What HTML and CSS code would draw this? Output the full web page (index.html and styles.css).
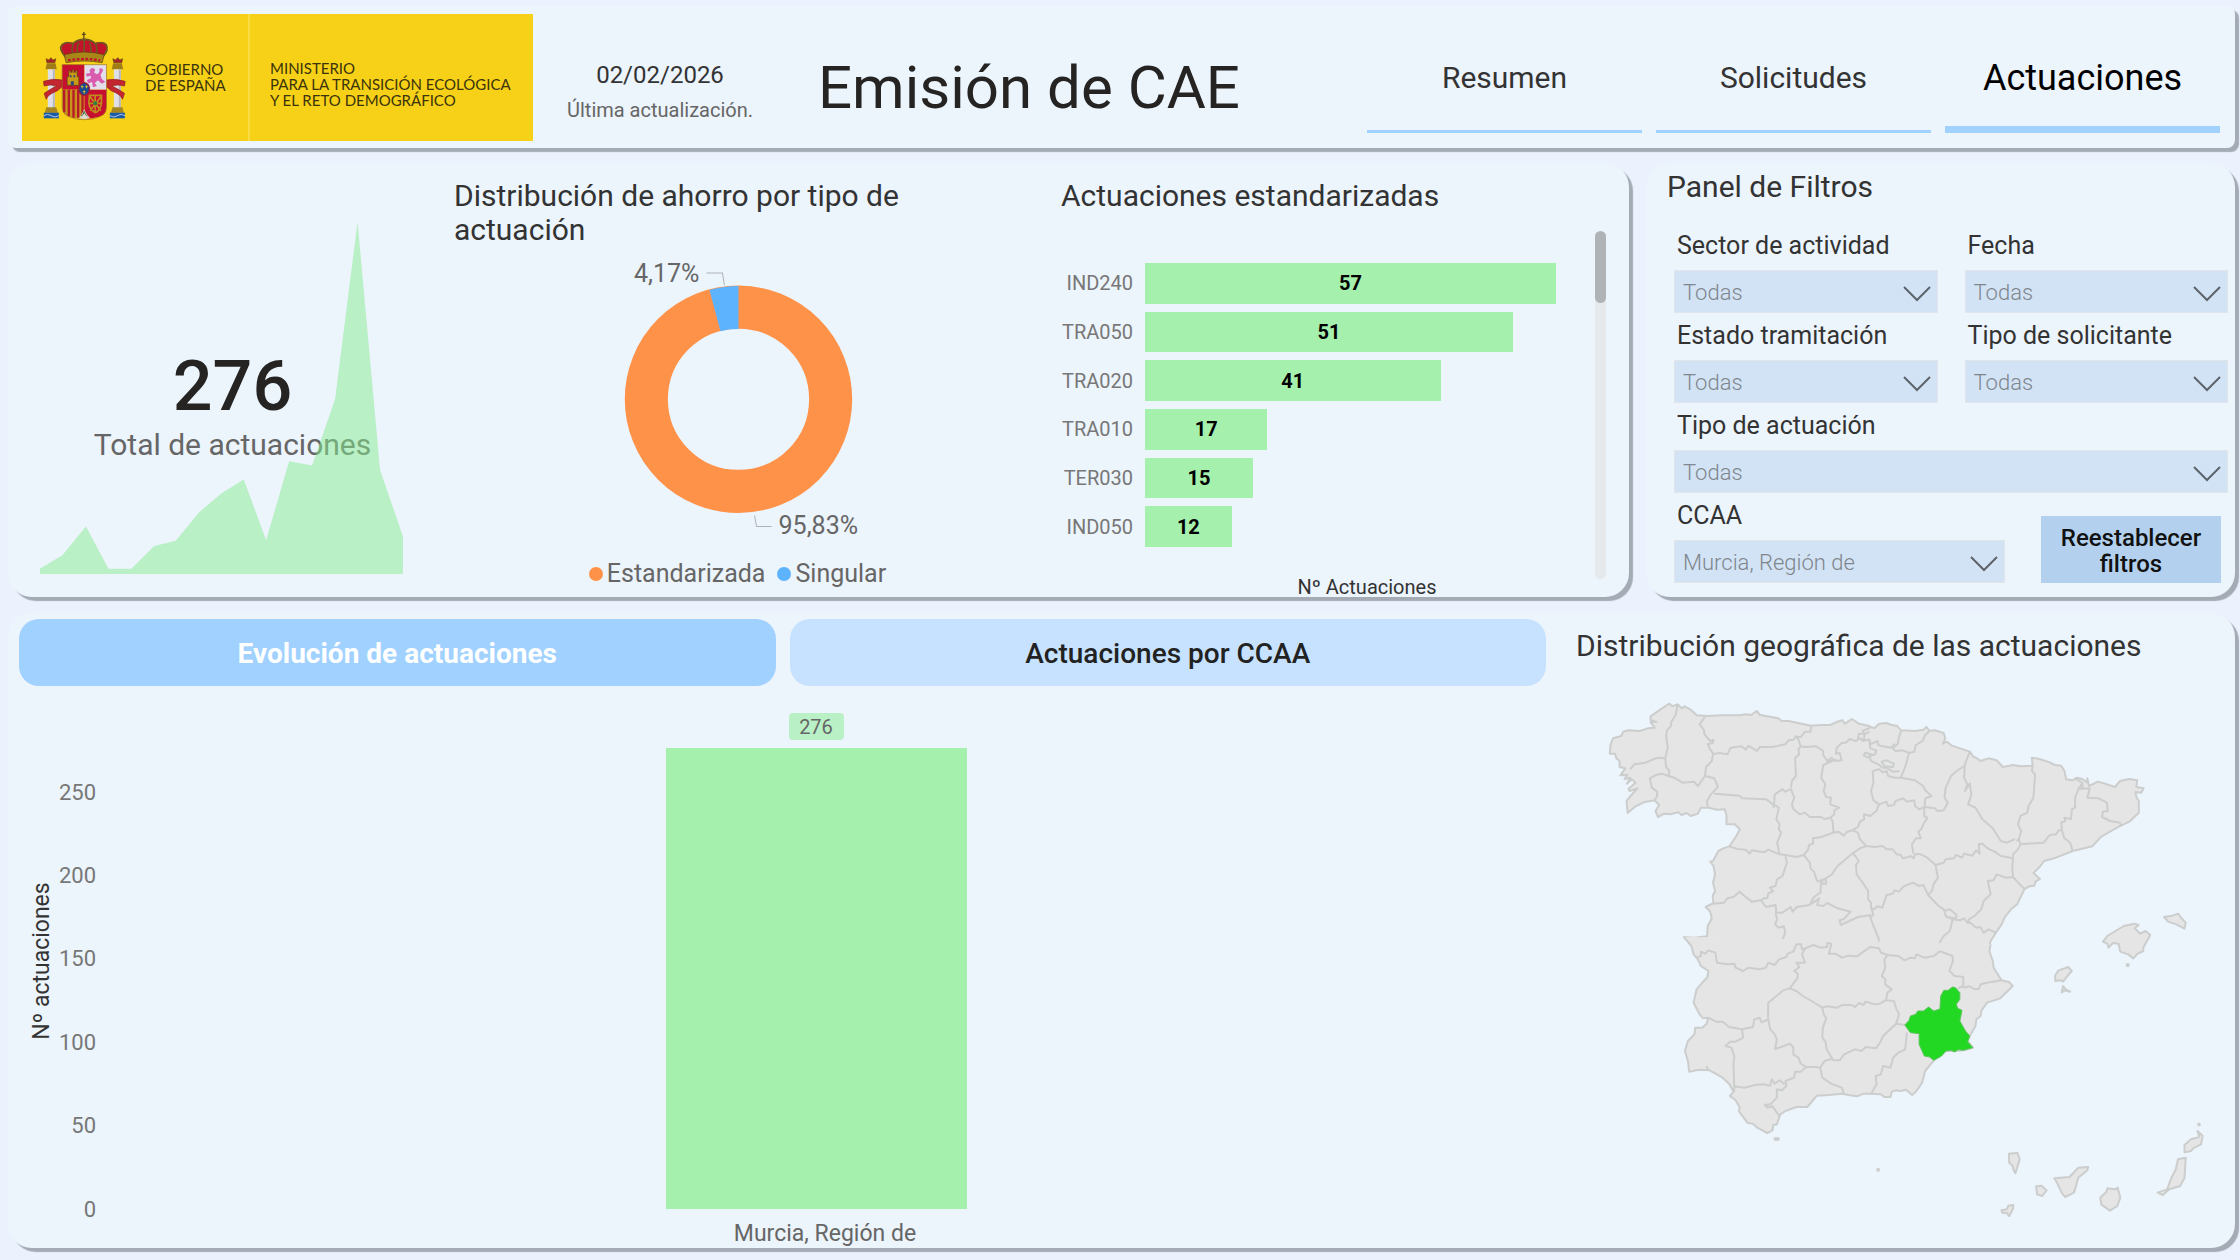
FILE: index.html
```html
<!DOCTYPE html>
<html lang="es">
<head>
<meta charset="utf-8">
<meta name="viewport" content="width=device-width, initial-scale=1">
<title>Emisión de CAE</title>
<link rel="stylesheet" href="styles.css">
</head>
<body>
<header class="panel header">
  <div class="logo">
    <div class="logo-state">
      <svg class="crest" viewBox="38 45 254 270" aria-hidden="true">
        <!-- crown -->
        <path d="M163 48v22M157 55h12" stroke="#5a4a20" stroke-width="4" fill="none"/>
        <path d="M108 122q-20-22-10-34q14-14 34-8q14-12 32-12t32 12q22-6 34 8q8 14-12 34z" fill="#c2132b"/>
        <path d="M108 124q-22-26-10-38q14-12 32-2q12-14 34-14t34 14q20-10 32 2q10 16-12 38M132 84q-10 20 2 34M198 84q10 20-2 34M164 70v48M148 80q-10 18 0 36M180 80q10 18 0 36" fill="none" stroke="#6a5a22" stroke-width="5"/>
        <path d="M104 116q60-16 120 0l-6 24q-54-10-108 0z" fill="#a88718" stroke="#5f3a12" stroke-width="2"/>
        <path d="M116 133q48-8 96 0" stroke="#c2132b" stroke-width="7" stroke-dasharray="8 5" fill="none"/>
        <!-- columns -->
        <g>
          <path d="M52 140l-2-12l8 4l6-7l7 7l8-4l-3 12z" fill="#a8242a" stroke="#6a4b15" stroke-width="2"/>
          <path d="M52 142h26l4 18H48z" fill="#a07d16"/>
          <path d="M55 160h21v116H55z" fill="#dfdfe6"/>
          <path d="M70 160h6v116h-6z" fill="#b9b5bf"/>
          <path d="M50 274h30l5 16H46z" fill="#a58721"/>
          <path d="M43 290h45v17H43z" fill="#1a59a6"/>
          <path d="M43 299q11-8 22 0t23 0" stroke="#a9c8e8" stroke-width="3" fill="none"/>
        </g>
        <g transform="translate(329 0) scale(-1 1)">
          <path d="M52 140l-2-12l8 4l6-7l7 7l8-4l-3 12z" fill="#a8242a" stroke="#6a4b15" stroke-width="2"/>
          <path d="M52 142h26l4 18H48z" fill="#a07d16"/>
          <path d="M55 160h21v116H55z" fill="#dfdfe6"/>
          <path d="M55 160h6v116h-6z" fill="#b9b5bf"/>
          <path d="M50 274h30l5 16H46z" fill="#a58721"/>
          <path d="M43 290h45v17H43z" fill="#1a59a6"/>
          <path d="M43 299q11-8 22 0t23 0" stroke="#a9c8e8" stroke-width="3" fill="none"/>
        </g>
        <path d="M98 192q-26-6-56 4l2 14q20-6 38 0q-22 10-38 22l6 18q4-14 34-26l14-12z" fill="#c3262f" stroke="#8c1f22" stroke-width="2"/>
        <path d="M231 192q26-6 56 4l-2 14q-20-6-38 0q22 10 38 22l-6 18q-4-14-34-26l-14-12z" fill="#c3262f" stroke="#8c1f22" stroke-width="2"/>
        <!-- shield -->
        <path d="M98 146h67v75H98z" fill="#c70f31"/>
        <path d="M165 146h66v75h-66z" fill="#e3dfea"/>
        <path d="M98 221h67v86q-34 2-56-10q-11-8-11-24z" fill="#c9921c"/>
        <path d="M104 221v68M118 221v80M132 221v84M146 221v84M159 221v80" stroke="#b51c28" stroke-width="7"/>
        <path d="M165 221h66v52q0 16-11 24q-22 12-55 10z" fill="#c70f31"/>
        <path d="M113 208v-26h5v-18h5v5h5v-8h5v8h5v-5h5v18h5v26z" fill="#c99a18" stroke="#5b4413" stroke-width="2"/>
        <path d="M124 208v-12h9v12zM121 178h5v6h-5zM132 178h5v6h-5z" fill="#27497c"/>
        <path d="M180 162l8-7l9 5l-3 10l9 5q10-6 6-16q8-6 12 4l-8 14l4 12l10 8l-10 6l-12-10l-9 8l6 10l-12 2l-2-15l-12 4l-4-9l13-7l-2-7l-11 3l-3-9l13-2z" fill="#d95cae"/>
        <path d="M180 238h36v22q-2 22-18 30q-18-8-20-30zM180 240l34 44M216 240l-34 44M197 238v52M176 262h42" fill="none" stroke="#c08a1c" stroke-width="5"/>
        <circle cx="197" cy="262" r="6" fill="#2f7c45"/>
        <path d="M149 306q10-12 15-26q6 14 17 26q-17 7-32 0z" fill="#ddd9cf"/>
        <path d="M155 300q8-3 9-14q2 10 10 14" fill="none" stroke="#39713f" stroke-width="3"/>
        <path d="M98 146h133v127q0 16-11 24q-24 14-56 14t-55-14q-11-8-11-24z" fill="none" stroke="#9b6e24" stroke-width="2"/>
        <ellipse cx="164" cy="219" rx="16" ry="19" fill="#174a90" stroke="#a51c32" stroke-width="4"/>
        <path d="M158 208v9M154 212h8M171 208v9M167 212h8M164 223v10M160 227h8" stroke="#d5b42c" stroke-width="3"/>
      </svg>
      <p>GOBIERNO<br>DE ESPAÑA</p>
    </div>
    <p class="logo-ministry">MINISTERIO<br>PARA LA TRANSICIÓN ECOLÓGICA<br>Y EL RETO DEMOGRÁFICO</p>
  </div>
  <div class="updated">
    <time datetime="2026-02-02">02/02/2026</time>
    <span>Última actualización.</span>
  </div>
  <h1>Emisión de CAE</h1>
  <nav class="nav">
    <a href="#resumen">Resumen</a>
    <a href="#solicitudes">Solicitudes</a>
    <a href="#actuaciones" class="active" aria-current="page">Actuaciones</a>
  </nav>
</header>

<main>
  <div class="top-row">
    <section class="panel summary">
      <div class="kpi">
        <p class="kpi-text"><strong>276</strong><span>Total de actuaciones</span></p>
        <svg class="kpi-area" viewBox="78 187 711 1055" preserveAspectRatio="none" aria-hidden="true">
          <path d="M78 1226L122 1186L168 1100L212 1226H257L302 1158L344 1142L390 1057L433 1001L477 959L521 1141L566 904L611 917L656 718L700 187L744 930L789 1130V1242H78Z"/>
        </svg>
      </div>

      <div class="donut">
        <h2>Distribución de ahorro por tipo de actuación</h2>
        <svg viewBox="454 247 590 312" role="img" aria-label="Estandarizada 95,83%, Singular 4,17%">
          <circle cx="738" cy="399" r="92" fill="none" stroke="#ff9249" stroke-width="43"/>
          <path d="M738 286A113 113 0 0 0 709 290L720 331A70 70 0 0 1 738 329Z" fill="#5eb3ff"/>
          <path d="M706 273H722L724 285M754 515L756 526H771" class="leader"/>
          <text x="699" y="282" text-anchor="end">4,17%</text>
          <text x="778" y="534">95,83%</text>
        </svg>
        <ul class="legend">
          <li><i class="dot orange"></i>Estandarizada</li>
          <li><i class="dot blue"></i>Singular</li>
        </ul>
      </div>

      <div class="ranking">
        <h2>Actuaciones estandarizadas</h2>
        <div class="ranking-body">
          <div class="ranking-plot">
            <ul class="bars">
              <li><span>IND240</span><div class="track"><b style="width:100%">57</b></div></li>
              <li><span>TRA050</span><div class="track"><b style="width:89.5%">51</b></div></li>
              <li><span>TRA020</span><div class="track"><b style="width:71.9%">41</b></div></li>
              <li><span>TRA010</span><div class="track"><b style="width:29.8%">17</b></div></li>
              <li><span>TER030</span><div class="track"><b style="width:26.3%">15</b></div></li>
              <li><span>IND050</span><div class="track"><b style="width:21.1%">12</b></div></li>
            </ul>
            <p class="axis-title">Nº Actuaciones</p>
          </div>
          <div class="scroll"><div class="thumb"></div></div>
        </div>
      </div>
    </section>

    <section class="panel filters">
      <h2>Panel de Filtros</h2>
      <form class="filter-grid">
        <div class="field">
          <label for="sector">Sector de actividad</label>
          <div class="select"><select id="sector"><option>Todas</option></select><svg viewBox="0 0 28 16" aria-hidden="true"><path d="M1 1L14 14L27 1"/></svg></div>
        </div>
        <div class="field">
          <label for="fecha">Fecha</label>
          <div class="select"><select id="fecha"><option>Todas</option></select><svg viewBox="0 0 28 16" aria-hidden="true"><path d="M1 1L14 14L27 1"/></svg></div>
        </div>
        <div class="field">
          <label for="estado">Estado tramitación</label>
          <div class="select"><select id="estado"><option>Todas</option></select><svg viewBox="0 0 28 16" aria-hidden="true"><path d="M1 1L14 14L27 1"/></svg></div>
        </div>
        <div class="field">
          <label for="solicitante">Tipo de solicitante</label>
          <div class="select"><select id="solicitante"><option>Todas</option></select><svg viewBox="0 0 28 16" aria-hidden="true"><path d="M1 1L14 14L27 1"/></svg></div>
        </div>
        <div class="field wide">
          <label for="tipo">Tipo de actuación</label>
          <div class="select"><select id="tipo"><option>Todas</option></select><svg viewBox="0 0 28 16" aria-hidden="true"><path d="M1 1L14 14L27 1"/></svg></div>
        </div>
        <div class="wide last-row">
          <div class="field">
            <label for="ccaa">CCAA</label>
            <div class="select"><select id="ccaa"><option>Murcia, Región de</option></select><svg viewBox="0 0 28 16" aria-hidden="true"><path d="M1 1L14 14L27 1"/></svg></div>
          </div>
          <button type="reset" class="reset">Reestablecer filtros</button>
        </div>
      </form>
    </section>
  </div>

  <section class="panel detail">
    <div class="evolution">
      <div class="tabs">
        <button type="button" class="tab selected">Evolución de actuaciones</button>
        <button type="button" class="tab">Actuaciones por CCAA</button>
      </div>
      <svg class="column-chart" viewBox="19 686 1527 561" role="img" aria-label="Murcia, Región de: 276 actuaciones">
        <path class="grid" d="M112 792.500H1540M112 875.500H1540M112 959.500H1540M112 1042.500H1540M112 1126.500H1540"/>
        <rect x="666" y="748" width="301" height="461" fill="#a6f0ad"/>
        <rect x="789" y="713" width="55" height="27" rx="4" fill="#b9f0c5"/>
        <g class="ticks">
          <text x="96" y="800">250</text>
          <text x="96" y="883">200</text>
          <text x="96" y="966">150</text>
          <text x="96" y="1050">100</text>
          <text x="96" y="1133">50</text>
          <text x="96" y="1217">0</text>
        </g>
        <text class="value" x="816" y="734">276</text>
        <text class="category" x="825" y="1241">Murcia, Región de</text>
        <text class="y-title" transform="translate(49 961) rotate(-90)">Nº actuaciones</text>
      </svg>
    </div>

    <div class="map">
      <h2>Distribución geográfica de las actuaciones</h2>
      <svg viewBox="1560 662 675 585" role="img" aria-label="Mapa de España con la Región de Murcia resaltada">
        <rect x="1720" y="925" width="260" height="30" fill="#e5e5e5"/>
        <!-- northern half: coast, then province borders -->
        <g class="land" transform="translate(1560 660) scale(.40816 .33333)">
          <path class="fill" d="M302 828L330 830L360 826L362 795L372 772L368 752L357 738L376 726L374 705L380 690L375 665L380 640L376 615L368 602L375 600L388 570L400 562L415 556L432 525L441 505L428 490L408 490L408 465L404 445L385 446L365 440L345 440L338 458L320 465L310 456L298 462L290 454L270 460L255 458L240 468L234 450L243 432L232 418L205 424L185 436L166 456L163 420L175 402L190 382L170 390L168 383L185 365L176 355L164 368L172 350L158 354L165 342L148 343L160 322L146 318L146 300L138 292L135 278L122 278L124 250L130 232L150 225L155 212L168 208L195 210L215 202L232 200L222 184L236 182L222 178L222 166L250 142L268 128L275 136L288 130L298 142L305 136L320 146L335 163L360 165L400 163L440 163L455 160L468 162L482 150L490 162L535 172L543 180L560 180L615 194L640 192L662 192L680 182L692 178L698 188L715 174L732 188L755 194L770 202L782 188L800 186L812 192L825 194L836 208L870 210L890 206L898 198L905 210L918 208L940 216L944 232L938 248L948 242L960 254L980 262L1004 272L1012 286L1022 292L1030 300L1050 292L1070 298L1085 318L1110 312L1128 316L1158 314L1156 290L1175 294L1200 304L1212 312L1228 314L1236 330L1240 355L1256 358L1266 350L1280 354L1290 364L1292 352L1296 375L1318 362L1340 370L1360 378L1372 360L1395 354L1414 358L1412 378L1430 382L1424 395L1410 393L1412 408L1418 420L1418 455L1395 482L1370 496L1325 528L1304 556L1256 570L1215 590L1186 600L1175 618L1160 636L1176 654L1165 662L1162 674L1150 676L1138 684L1120 730L1105 745L1090 768L1082 790L1068 815L1055 840L1053 850"/>
          <path d="M288 130L284 160L272 185L272 195L262 208L260 225L264 260L258 292M172 325L182 310L210 305L230 294L240 290L258 292M258 292L260 318L268 330L266 345L250 338L235 342L220 352L225 380L238 392L238 405L232 418M266 345L280 350L300 365L328 362L338 375L355 345M355 168L342 190L352 205L354 220L368 240L376 236L374 246L362 250L368 265L375 278L372 300L358 318L355 345M355 345L378 352L387 378L370 400L360 420L362 438M375 280L390 276L410 280L418 260L445 256L455 266L462 254L482 270L490 258L520 258L552 250L560 238L572 236L578 225L585 238L590 256M615 194L614 212L600 212L590 228L578 228M590 256L602 258L628 256L645 270L645 282L655 300M590 256L584 265L586 280L576 292L578 345L568 360L566 380M378 398L440 404L446 412L505 415L520 428L524 438L526 400M526 400L545 385L552 392L562 386L566 385L574 410L568 430L572 445L588 460L600 455L612 468L640 468L648 474L662 470M655 295L655 302L675 296L645 312L640 350L650 370L646 390L652 408L664 410L662 430L684 440L672 448L672 460L662 470M655 300L665 290L674 300L690 298L685 275L676 278L678 260L690 246L700 245L710 234L725 240L734 232L742 240L758 235M760 200L742 210L745 218L732 218L730 232L745 236L746 220L758 212M758 235L760 250L778 240L780 252L790 256L812 260L820 248M836 208L830 230L828 248L815 262L822 270L840 268L855 276M905 210L895 222L888 240L872 252L868 272L855 276M855 276L850 300L845 320L835 350M758 235L760 262L775 268L772 280L758 285L762 300L780 310L790 320L800 320L815 332L832 330M788 302L800 298L818 308L816 318L795 316ZM748 275L762 280L755 290L744 284ZM766 330L782 325L790 334L800 330L804 345L820 350L835 350L870 358L890 375L895 388L910 405L895 412L893 438M766 330L768 365L762 390L768 418L782 430L800 422L804 435L818 432L822 420L840 412L850 422L868 418L870 435L880 445L893 438M782 430L775 450L760 465L745 460L745 475L735 482L730 498L716 508M662 470L668 480L670 515L682 512L695 524L704 512L716 508M670 515L640 528L620 532L620 548L610 552L608 566L597 582M526 432L536 440L530 475L538 490L536 505L542 515L532 545L538 580M415 556L435 564L455 566L464 578L470 568L500 574L510 566L538 580L552 582L580 588L597 582M552 585L556 605L545 645L532 655L528 675L514 680L522 690L510 698L508 712L498 712L492 722M376 728L402 725L410 712L425 708L440 692L452 705L470 722L492 718L505 738L528 732L530 755L545 755L565 738L570 752L580 738L612 732M597 582L612 605L614 622L622 632L630 660L645 662M640 656h12v12h-12ZM645 656L665 642L680 615L718 576L735 562L750 555M716 508L730 515L735 535L750 555M750 555L770 558L790 555L800 565L815 565L825 580L835 582L840 592L860 586L866 592L870 580L880 578M718 576L732 600L725 612L727 640L735 655L740 662L755 690L755 715L762 725L762 745M640 662L638 695L622 708L612 732M612 732L635 712L630 732L645 735L655 726L680 742L712 752L695 775L685 778L688 792L730 768L762 762M762 740L768 745L778 736L790 740L800 702L815 698L820 688L830 692L842 676L865 665L880 675L890 672L902 702M880 578L900 590L920 612L926 650L915 670L912 688L902 702M893 438L892 465L900 470L890 490L885 505L878 512L884 532L872 532L862 550L866 578M893 438L918 442L925 450L940 448L950 425L942 410L945 380L958 345L972 330L990 315M1004 272L992 310L990 350L998 370L992 390L1004 368L1008 400L1000 430L1018 440L1035 475L1060 502L1080 540L1095 545L1115 534M1158 314L1156 330L1164 340L1160 410L1148 435L1145 455L1128 465L1122 490L1130 510L1124 535L1118 540M920 612L940 605L945 595L965 592L970 582L985 590L990 578L1010 584L1020 568L1028 578L1026 550L1035 548L1050 564L1065 572L1080 585L1110 592M1124 535L1128 550L1122 565L1110 580L1110 592M1128 550L1185 545L1200 522L1215 520L1222 508L1230 508M1230 508L1228 485L1238 480L1236 470L1252 474L1254 445L1262 440L1262 410L1270 384L1280 366M1270 384L1298 382L1292 410L1320 412L1340 425L1342 450L1330 452L1328 468L1348 480L1372 485L1375 496M1262 352L1280 366L1280 382M1230 508L1235 530L1250 545L1256 570M1110 592L1108 620L1110 648L1092 650L1070 640L1062 658L1048 660L1055 700L1038 720L1032 745L1015 765L1002 775L1000 788M1110 648L1120 662L1138 684M1000 780L1020 800L1030 798L1038 815L1050 805L1068 815M902 702L925 732L940 745L945 765L962 775L980 778L990 772L1000 788M940 750L955 745L972 762L970 772L945 768M962 775L955 810L940 825L930 845L928 870M762 740L768 762L760 768L768 795L780 830L784 862M528 755L532 775L527 790L535 800L548 796L552 812L545 840L560 862L578 870"/>
          <path class="fill" d="M1480 768L1500 764L1515 758L1520 768L1533 785L1530 803L1510 790L1490 782Z"/>
        </g>
        <!-- southern half and islands -->
        <g class="land" transform="translate(1560 920) scale(.43367 .33333)">
          <path class="fill" d="M285 47L303 75L308 100L318 115L325 135L342 150L340 168L328 185L315 205L308 245L322 280L330 292L342 290L338 308L328 320L312 320L310 340L295 360L288 390L295 420L298 452L320 446L345 448L375 470L390 488L400 512L392 525L405 538L415 560L412 570L432 605L445 608L455 620L478 636L490 628L492 612L500 610L508 580L520 570L545 558L570 558L582 540L592 524L620 522L650 518L665 522L685 526L700 518L715 518L740 520L748 528L762 528L765 512L775 508L785 510L798 506L812 522L822 510L835 485L842 450L862 418L888 390L910 390L930 388L952 380L940 360L945 345L958 315L960 295L970 285L972 268L985 245L1015 232L1044 195L1035 183L1018 178L1000 140L998 120L990 90L993 70"/>
          <path d="M315 110L325 105L325 92L335 98L342 88L358 95L362 125L385 130L402 128L405 140L422 150L435 140L460 145L475 140L480 125L495 132L505 115L522 108L525 98L538 92L545 70L556 70L558 85L565 82L585 72L600 80L616 78L616 66L626 68L620 98L635 98L650 110L665 104L685 106L700 92L715 78L735 82M735 80L740 95L755 102L780 105L795 118L808 110L818 112L822 100L840 110L862 105L875 92M875 90L905 105L906 120L898 150L910 165L930 168L930 195L918 202M930 200L945 196L955 204L965 204L970 190L985 185L1018 178M565 82L558 100L565 125L545 125L552 138L540 150L548 158L548 170L530 202M530 202L515 208L480 245L480 295M342 290L360 302L375 302L390 318L420 325L445 318L448 295L460 290L465 304L480 295M530 202L545 210L560 225L580 240L605 260L615 256L640 260L650 252L672 252L680 258L690 246L700 252L705 242L725 250L738 248L750 238M755 102L748 115L750 140L742 165L750 175L750 190L765 205L755 215L752 238L770 240L775 262L782 280L775 308L795 312M605 260L608 280L614 292L606 320L605 350L612 362L615 385L630 418M630 418L645 418L655 400L680 385L695 390L705 378L728 382L738 365L745 345L775 308M480 295L485 325L495 340L500 355L496 384L510 378L530 368L538 378L538 400L550 410L555 428L568 438L590 438L600 440L610 420L630 412M568 438L555 452L542 452L540 470L520 480L522 495L512 508L500 505L500 530L485 550L472 552L478 560L490 556L500 575L508 588M400 495L425 500L450 492L470 490L485 494L488 475L495 488L506 478L518 490M420 325L422 350L405 362L392 362L382 375L395 380L402 405L400 430L402 512M600 440L605 470L625 488L650 500L655 520M800 335L796 385L780 395L768 410L762 440L745 435L740 460L728 465L730 490L725 500L718 518M338 435L342 450"/>
          <path class="fill" d="M1150 148L1172 138L1180 150L1170 165L1160 182L1155 178L1142 180L1142 162ZM1160 195L1166 205L1176 212L1164 208L1157 214ZM1252 62L1262 45L1300 15L1325 8L1334 12L1325 22L1338 38L1350 30L1361 42L1345 80L1345 90L1332 98L1322 112L1310 100L1292 92L1288 68L1275 66L1265 80L1262 68ZM1035 698L1055 696L1060 715L1050 757L1045 745L1044 735L1036 725ZM1098 796L1110 794L1122 808L1112 825L1100 820ZM1018 868L1030 865L1034 854L1045 852L1045 862L1036 885L1030 876L1020 875ZM1140 772L1175 768L1195 740L1218 738L1216 748L1195 770L1190 795L1185 815L1165 828L1158 818L1146 785ZM1262 802L1280 805L1286 800L1292 830L1285 855L1268 869L1248 850L1246 830L1260 812ZM1378 815L1400 805L1410 770L1420 745L1425 715L1443 710L1440 770L1430 795L1405 805L1390 822ZM1440 694L1440 672L1455 655L1474 648L1470 630L1482 645L1478 670L1460 682L1455 690ZM1472 608h3v5h-3zM732 744h3v5h-3zM495 652h9v4h-9zM1307 130h4v5h-4z"/>
          <path class="region" d="M795 312L805 298L808 285L820 280L825 270L838 270L850 258L862 270L876 264L878 225L885 208L895 208L905 198L912 200L922 215L922 235L914 250L917 262L927 268L922 300L935 330L945 345L940 362L952 380L930 388L918 386L910 393L902 388L890 390L880 405L862 418L852 408L840 405L828 370L828 338L808 335Z"/>
        </g>
      </svg>
    </div>
  </section>
</main>
</body>
</html>
```

FILE: styles.css
```css
* { box-sizing: border-box; }

body {
  margin: 0;
  padding: 6px 5px 13px 8px;
  min-height: 100vh;
  background: #ebf2fe;
  color: #333;
  font-family: Roboto, "Liberation Sans", sans-serif;
}

h1, h2, p, ul { margin: 0; padding: 0; }
ul { list-style: none; }
svg { display: block; }

.panel {
  background: #ecf4fc;
  border-radius: 24px;
  box-shadow: 4px 4px 1px #a4abb5;
}

h2 {
  font-size: 30px;
  line-height: 34px;
  font-weight: 400;
}

/* Header */
.header {
  display: flex;
  align-items: flex-start;
  min-height: 142px;
  padding: 8px 15px 7px 14px;
  border-radius: 8px;
}

.logo {
  display: flex;
  flex: none;
  width: 511px;
  height: 127px;
  background: #f7d117;
  color: #3b330c;
  font-family: Lato, sans-serif;
  font-size: 15px;
  line-height: 16px;
}

.logo-state {
  display: flex;
  gap: 18px;
  width: 228px;
  padding: 17px 0 0 20px;
  border-right: 2px solid #f9dc44;
}

.logo-state p { padding-top: 30px; }
.crest { width: 85px; height: 90px; }
.logo-ministry { padding: 46px 0 0 20px; white-space: nowrap; }

.updated {
  display: flex;
  flex-direction: column;
  flex: none;
  width: 254px;
  padding-top: 44px;
  text-align: center;
  line-height: 35px;
}

.updated time { font-size: 24px; }
.updated span { font-size: 20px; color: #666; }

h1 {
  flex: none;
  padding: 38px 0 0 31px;
  font-size: 60px;
  line-height: 72px;
  font-weight: 400;
  color: #252423;
}

.nav {
  display: flex;
  gap: 14px;
  flex: 0 1 853px;
  margin-left: auto;
}

.nav a {
  flex: 1;
  height: 119px;
  padding-top: 44px;
  border-bottom: 3px solid #a0d1ff;
  color: #333;
  font-size: 30px;
  line-height: 40px;
  text-align: center;
  text-decoration: none;
}

.nav .active {
  border-bottom-width: 7px;
  color: #000;
  font-size: 36px;
}

/* Summary row */
.top-row {
  display: grid;
  grid-template-columns: 1621fr 589fr;
  gap: 17px;
  margin: 15px 0 16px;
}

.summary {
  display: grid;
  grid-template-columns: 432fr 605fr 584fr;
}

.kpi {
  display: grid;
  padding: 59px 37px 23px 32px;
}

.kpi-text {
  grid-area: 1 / 1;
  display: flex;
  flex-direction: column;
  padding: 125px 0 0 22px;
  text-align: center;
}

.kpi-text strong {
  color: #252423;
  font-size: 70px;
  line-height: 78px;
  font-weight: 500;
}

.kpi-text span {
  color: #666;
  font-size: 30px;
  line-height: 40px;
  white-space: nowrap;
}

.kpi-area {
  grid-area: 1 / 1;
  width: 100%;
  height: 352px;
  z-index: 1;
  fill: #86ec8e;
  fill-opacity: .5;
}

.donut { padding: 16px 0 0 14px; }
.donut h2 { max-width: 490px; }
.donut svg { width: 100%; }
.donut text { font-size: 25px; fill: #666; }
.leader { fill: none; stroke: #b0b4b8; stroke-width: 1; }

.legend {
  display: flex;
  justify-content: center;
  gap: 12px;
  padding-right: 24px;
  color: #666;
  font-size: 25px;
  line-height: 28px;
}

.legend li { display: flex; align-items: center; gap: 4px; }
.dot { width: 14px; height: 14px; border-radius: 50%; }
.orange { background: #ff9249; }
.blue { background: #5eb3ff; }

.ranking { padding: 16px 23px 0 16px; }

.ranking-body {
  display: flex;
  gap: 5px;
  height: 366px;
  padding-top: 18px;
}

.ranking-plot { flex: 1; padding-top: 32px; }

.bars {
  display: flex;
  flex-direction: column;
  gap: 8px;
  height: 284px;
}

.bars li {
  flex: 1;
  display: grid;
  grid-template-columns: 72px 1fr;
  gap: 12px;
  align-items: stretch;
}

.bars span {
  align-self: center;
  color: #777;
  font-size: 20px;
  line-height: 24px;
  text-align: right;
}

.track { display: flex; padding-right: 34px; }

.track b {
  display: flex;
  align-items: center;
  justify-content: center;
  background: #a6f0ad;
  color: #000;
  font-size: 20px;
  line-height: 24px;
}

.axis-title {
  padding: 28px 0 0 83px;
  font-size: 20px;
  line-height: 24px;
  text-align: center;
}

.scroll {
  width: 11px;
  height: 348px;
  border-radius: 6px;
  background: #e6e9ec;
}

.thumb {
  height: 72px;
  border-radius: 6px;
  background: #b0b3b5;
}

/* Filters */
.filters { padding: 7px 7px 14px 21px; }

.filter-grid {
  display: grid;
  grid-template-columns: 1fr 1fr;
  gap: 7px 27px;
  margin: 26px 0 0 7px;
}

.wide { grid-column: 1 / -1; }

.field {
  display: flex;
  flex-direction: column;
  gap: 8px;
}

.field label {
  padding-left: 3px;
  font-size: 25px;
  line-height: 32px;
}

.select { position: relative; }

.select select {
  display: block;
  width: 100%;
  height: 43px;
  padding: 2px 36px 0 8px;
  border: 1px solid #e1e5ea;
  border-radius: 0;
  appearance: none;
  background: #d2e3f5;
  color: #7f868d;
  font-family: inherit;
  font-size: 22px;
  font-weight: 300;
}

.select svg {
  position: absolute;
  right: 7px;
  top: 16px;
  width: 28px;
  height: 16px;
  fill: none;
  stroke: #5d646b;
  stroke-width: 2;
  pointer-events: none;
}

.last-row {
  display: flex;
  align-items: flex-end;
  justify-content: space-between;
  padding-right: 7px;
}

.last-row .field { width: 331px; }

.reset {
  width: 180px;
  height: 67px;
  padding: 3px 16px 0;
  border: 0;
  background: #b3d1ee;
  color: #111;
  font-family: inherit;
  font-size: 24px;
  font-weight: 500;
  line-height: 26px;
}

/* Detail */
.detail {
  display: grid;
  grid-template-columns: 1527fr 675fr;
  gap: 14px;
  padding: 6px 0 0 11px;
}

.tabs { display: flex; gap: 14px; }

.tab {
  flex: 1;
  height: 67px;
  padding: 2px 16px 0;
  border: 0;
  border-radius: 20px;
  background: #c7e2fe;
  color: #222;
  font-family: inherit;
  font-size: 28px;
  font-weight: 500;
}

.tab.selected {
  background: #a0d1ff;
  color: #fff;
  font-weight: 700;
}

.column-chart { width: 100%; }
.column-chart text { font-size: 23px; fill: #666; text-anchor: middle; }
.column-chart .ticks text { font-size: 22px; fill: #777; text-anchor: end; }
.column-chart .value { font-size: 20px; }
.column-chart .y-title { fill: #333; }
.grid { stroke: #ebf2f9; stroke-width: 1; }

.map h2 { padding: 10px 0 0 16px; white-space: nowrap; }
.map svg { width: 100%; }

.land path {
  fill: none;
  stroke: #cccdcd;
  stroke-width: 2;
  stroke-linejoin: round;
  vector-effect: non-scaling-stroke;
}

.land .fill { fill: #e5e5e5; }
.land .region { fill: #22d822; stroke: #5fc45f; stroke-width: 1; }
```
